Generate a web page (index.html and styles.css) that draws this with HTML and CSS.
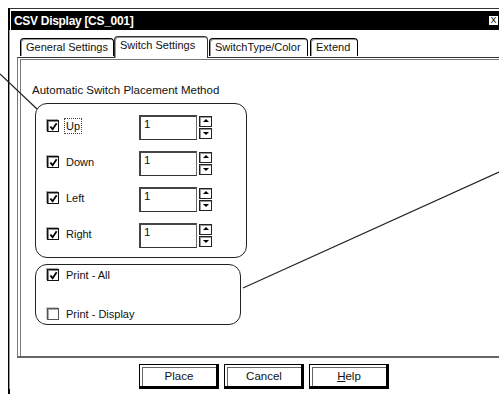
FILE: index.html
```html
<!DOCTYPE html>
<html>
<head>
<meta charset="utf-8">
<link rel="stylesheet" href="styles.css">
</head>
<body>
<div class="window">
  <div class="titlebar">
    <span class="title">CSV Display [CS_001]</span>
    <span class="close">X</span>
  </div>
  <div class="client">
    <div class="tabs">
      <div class="tab">General Settings</div>
      <div class="tab active">Switch Settings</div>
      <div class="tab">SwitchType/Color</div>
      <div class="tab">Extend</div>
    </div>
    <div class="panel">
      <div class="caption">Automatic Switch Placement Method</div>
      <div class="group group-dirs">
        <div class="row">
          <label class="check"><span class="cb on"><svg viewBox="0 0 10 10"><path d="M1.5 5 L4 8 L8.5 1.5"/></svg></span><span class="lbl focus">Up</span></label>
          <div class="spin"><div class="field">1</div><div class="arrows"><span class="arr up"></span><span class="arr down"></span></div></div>
        </div>
        <div class="row">
          <label class="check"><span class="cb on"><svg viewBox="0 0 10 10"><path d="M1.5 5 L4 8 L8.5 1.5"/></svg></span><span class="lbl">Down</span></label>
          <div class="spin"><div class="field">1</div><div class="arrows"><span class="arr up"></span><span class="arr down"></span></div></div>
        </div>
        <div class="row">
          <label class="check"><span class="cb on"><svg viewBox="0 0 10 10"><path d="M1.5 5 L4 8 L8.5 1.5"/></svg></span><span class="lbl">Left</span></label>
          <div class="spin"><div class="field">1</div><div class="arrows"><span class="arr up"></span><span class="arr down"></span></div></div>
        </div>
        <div class="row">
          <label class="check"><span class="cb on"><svg viewBox="0 0 10 10"><path d="M1.5 5 L4 8 L8.5 1.5"/></svg></span><span class="lbl">Right</span></label>
          <div class="spin"><div class="field">1</div><div class="arrows"><span class="arr up"></span><span class="arr down"></span></div></div>
        </div>
      </div>
      <div class="group group-print">
        <label class="check"><span class="cb on"><svg viewBox="0 0 10 10"><path d="M1.5 5 L4 8 L8.5 1.5"/></svg></span><span class="lbl">Print - All</span></label>
        <label class="check"><span class="cb off"></span><span class="lbl">Print - Display</span></label>
      </div>
    </div>
    <div class="buttons">
      <div class="btn">Place</div>
      <div class="btn">Cancel</div>
      <div class="btn"><u>H</u>elp</div>
    </div>
  </div>
</div>
<svg class="callouts" width="499" height="394" viewBox="0 0 499 394">
  <line x1="0" y1="74" x2="37" y2="109"/>
  <line x1="243" y1="288" x2="499" y2="172"/>
</svg>
</body>
</html>
```
FILE: styles.css
```css
* { box-sizing: border-box; }
html, body { margin: 0; padding: 0; }
body {
  width: 499px;
  height: 394px;
  overflow: hidden;
  background: #fff;
  color: #111;
  font-family: "Liberation Sans", Arial, sans-serif;
  font-size: 11px;
  position: relative;
}
.window {
  margin: 8px 0 0 8px;
  border-top: 1px solid #333;
  border-left: 2px solid #000;
  padding: 2px 0 0 1px;
  height: 400px;
  width: 520px;
}
.titlebar {
  height: 19px;
  background: #000;
  color: #fff;
  display: flex;
  align-items: center;
  justify-content: space-between;
  padding-left: 3px;
}
.title {
  font-weight: bold;
  font-size: 12px;
  letter-spacing: -0.3px;
}
.close {
  width: 11px;
  height: 11px;
  background: #fff;
  color: #000;
  border: 1px solid #000;
  font-size: 9px;
  line-height: 9px;
  text-align: center;
  overflow: hidden;
  margin-right: 29px;
}
.client {
  padding: 6px 0 0 7px;
  border-left: 1px solid #999;
  margin-left: -2px;
}
.tabs {
  display: flex;
  align-items: flex-end;
  padding-left: 3px;
  position: relative;
  z-index: 1;
}
.tab {
  height: 18px;
  padding: 0 5px;
  border: 1px solid #000;
  border-bottom: none;
  border-radius: 4px 4px 0 0;
  box-shadow: inset 1px 1px 0 #999;
  background: #fff;
  line-height: 17px;
  white-space: nowrap;
  margin-bottom: 1px;
}
.tab:first-child { width: 94px; }
.tab:nth-child(2) { width: 94px; }
.tab:nth-child(3) { width: 99px; margin-left: 1px; }
.tab:nth-child(4) { width: 48px; margin-left: 2px; }
.tab.active {
  height: 22px;
  margin-bottom: -1px;
  line-height: 17px;
  padding-bottom: 4px;
  border-color: #333;
  z-index: 2;
}
.panel {
  height: 301px;
  border-top: 1px solid #333;
  border-left: 1px solid #777;
  border-bottom: 2px solid #666;
  box-shadow: inset 2px 1px 0 #fff, inset 3px 2px 0 #777;
  padding: 26px 0 0 14px;
}
.caption {
  line-height: 13px;
  font-size: 11.5px;
}
.group {
  border: 1px solid #222;
  border-radius: 12px;
  margin-left: 3px;
}
.group-dirs {
  width: 212px;
  margin-top: 6px;
  padding: 11px 0 9px 11px;
  display: flex;
  flex-direction: column;
  gap: 11px;
}
.row {
  height: 25px;
  display: flex;
  align-items: flex-start;
}
.row .check {
  width: 92px;
  margin-top: 3px;
}
.check {
  display: flex;
  align-items: center;
  height: 16px;
}
.cb {
  width: 12px;
  height: 12px;
  border: 1px solid #111;
  box-shadow: inset 1px 1px 0 #888, -1px -1px 0 #aaa;
  background: #fff;
  display: flex;
  align-items: center;
  justify-content: center;
  margin-right: 5px;
  flex: none;
}
.cb svg {
  width: 9px;
  height: 9px;
}
.cb svg path {
  fill: none;
  stroke: #000;
  stroke-width: 2;
}
.cb.off {
  border-color: #555;
  box-shadow: inset 1px 1px 0 #aaa, -1px -1px 0 #ccc;
}
.lbl {
  padding: 1px 1px;
  border: 1px solid transparent;
  line-height: 12px;
}
.lbl.focus {
  border: 1px dotted #444;
}
.spin {
  display: flex;
  align-items: flex-start;
  height: 25px;
}
.field {
  width: 58px;
  height: 25px;
  border-top: 2px solid #444;
  border-left: 2px solid #444;
  border-bottom: 1px solid #333;
  border-right: 1px solid #666;
  padding: 1px 0 0 3px;
  line-height: 12px;
  font-size: 11.5px;
}
.arrows {
  display: flex;
  flex-direction: column;
  gap: 1px;
  margin-left: 2px;
  padding-top: 1px;
}
.arr {
  width: 13px;
  height: 11px;
  border: 1px solid #222;
  box-shadow: inset 1px 1px 0 #999;
  position: relative;
  background: #fff;
}
.arr::after {
  content: "";
  position: absolute;
  left: 3px;
  width: 0;
  height: 0;
  border-left: 3px solid transparent;
  border-right: 3px solid transparent;
}
.arr.up::after {
  top: 2px;
  border-bottom: 3px solid #000;
}
.arr.down::after {
  top: 3px;
  border-top: 3px solid #000;
}
.group-print {
  width: 206px;
  margin-top: 6px;
  height: 61px;
  padding: 2px 0 0 11px;
  display: flex;
  flex-direction: column;
  gap: 23px;
}
.buttons {
  display: flex;
  gap: 5px;
  margin: 6px 0 0 122px;
}
.btn {
  width: 80px;
  height: 25px;
  border: 1px solid #000;
  box-shadow: inset -2px -2px 0 #000, inset 2px 2px 0 #fff, inset 3px 3px 0 #666;
  text-align: center;
  line-height: 23px;
  font-size: 11.5px;
}
.callouts {
  position: absolute;
  left: 0;
  top: 0;
  pointer-events: none;
}
.callouts line {
  stroke: #222;
  stroke-width: 1.2;
}
```
